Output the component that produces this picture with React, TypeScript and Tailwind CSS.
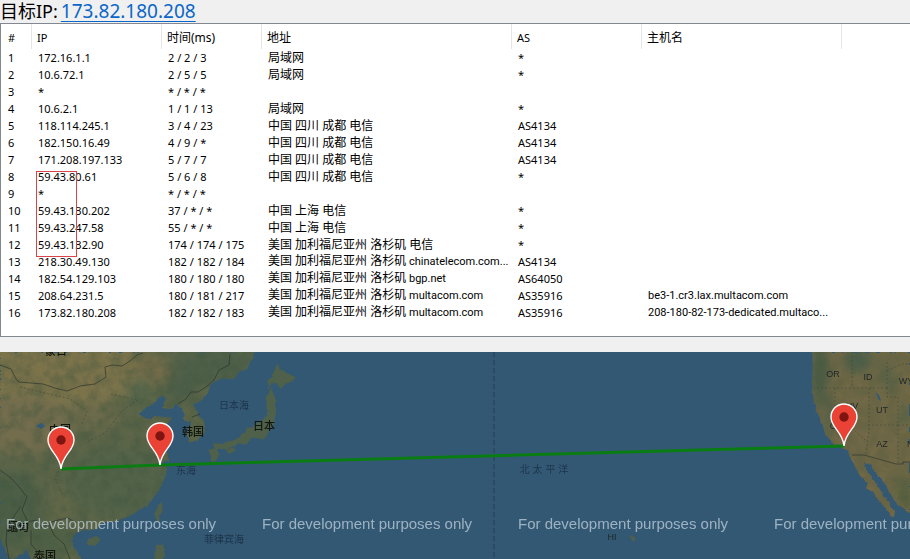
type Hop = {
  ip: string
  time: string
  place: string
  isp?: string
  as: string
  host?: string
}

const columns = ['#', 'IP', '时间(ms)', '地址', 'AS', '主机名']

const hops: Hop[] = [
  { ip: '172.16.1.1', time: '2 / 2 / 3', place: '局域网', as: '*' },
  { ip: '10.6.72.1', time: '2 / 5 / 5', place: '局域网', as: '*' },
  { ip: '*', time: '* / * / *', place: '', as: '' },
  { ip: '10.6.2.1', time: '1 / 1 / 13', place: '局域网', as: '*' },
  { ip: '118.114.245.1', time: '3 / 4 / 23', place: '中国 四川 成都 电信', as: 'AS4134' },
  { ip: '182.150.16.49', time: '4 / 9 / *', place: '中国 四川 成都 电信', as: 'AS4134' },
  { ip: '171.208.197.133', time: '5 / 7 / 7', place: '中国 四川 成都 电信', as: 'AS4134' },
  { ip: '59.43.80.61', time: '5 / 6 / 8', place: '中国 四川 成都 电信', as: '*' },
  { ip: '*', time: '* / * / *', place: '', as: '' },
  { ip: '59.43.130.202', time: '37 / * / *', place: '中国 上海 电信', as: '*' },
  { ip: '59.43.247.58', time: '55 / * / *', place: '中国 上海 电信', as: '*' },
  { ip: '59.43.132.90', time: '174 / 174 / 175', place: '美国 加利福尼亚州 洛杉矶 电信', as: '*' },
  { ip: '218.30.49.130', time: '182 / 182 / 184', place: '美国 加利福尼亚州 洛杉矶', isp: 'chinatelecom.com...', as: 'AS4134' },
  { ip: '182.54.129.103', time: '180 / 180 / 180', place: '美国 加利福尼亚州 洛杉矶', isp: 'bgp.net', as: 'AS64050' },
  { ip: '208.64.231.5', time: '180 / 181 / 217', place: '美国 加利福尼亚州 洛杉矶', isp: 'multacom.com', as: 'AS35916', host: 'be3-1.cr3.lax.multacom.com' },
  { ip: '173.82.180.208', time: '182 / 182 / 183', place: '美国 加利福尼亚州 洛杉矶', isp: 'multacom.com', as: 'AS35916', host: '208-180-82-173-dedicated.multaco...' },
]

const pins = [
  { x: 61, y: 117 },
  { x: 160, y: 113 },
  { x: 844, y: 94 },
]

const countryLabels = [
  { x: 56, y: 3, text: '蒙古' },
  { x: 60, y: 82, text: '中国' },
  { x: 193, y: 84, text: '韩国' },
  { x: 264, y: 78, text: '日本' },
  { x: 18, y: 179, text: '缅甸' },
  { x: 45, y: 208, text: '泰国' },
]

const seaLabels = [
  { x: 234, y: 57, text: '日本海' },
  { x: 186, y: 122, text: '东海' },
  { x: 224, y: 191, text: '菲律宾海' },
  { x: 544, y: 121, text: '北 太 平 洋' },
]

const stateLabels = [
  { x: 833, y: 25, text: 'OR' },
  { x: 868, y: 28, text: 'ID' },
  { x: 906, y: 32, text: 'WY' },
  { x: 852, y: 57, text: 'NV' },
  { x: 882, y: 61, text: 'UT' },
  { x: 836, y: 77, text: 'CA' },
  { x: 882, y: 95, text: 'AZ' },
  { x: 914, y: 95, text: 'NM' },
  { x: 612, y: 188, text: 'HI' },
]

const asia =
  'M0 0H255L251 8L247 16L240 20L233 27L222 26L212 31L208 41L202 48L193 53L197 60L203 69L205 80L198 87L190 91L187 82L190 71L183 67L184 60L178 52L170 57L162 56L165 47L162 44L153 52L143 57L140 62L146 67L158 64L173 66L166 72L158 78L160 90L166 98L169 108L161 112L167 117L164 127L158 140L148 152L135 161L120 168L105 171L94 178L87 177L76 181L71 187L74 195L82 207H31L27 197L20 203L13 207H8L4 194L0 187Z'

const america =
  'M812 0L813 15L812 32L814 50L819 65L825 81L833 92L840 94L848 99L852 109L861 125L868 131L866 136L874 142L882 152L889 162L894 165L895 161L889 151L883 144L877 132L868 121L864 110L871 113L874 119L884 131L893 146L902 156L910 162V0Z'

const japan = [
  'M277 11L281 18L288 22L296 25L292 30L285 32L281 37L276 31L271 32L268 38L267 30L272 25Z',
  'M271 36L276 48L276 61L273 75L263 87L253 86L245 93L240 91L227 97L215 97L213 92L230 90L240 85L248 76L261 70L267 61L266 47Z',
  'M225 98L233 95L236 98L229 102Z',
  'M210 98L217 96L219 104L213 111L210 105Z',
]

const islands = [
  'M160 150L163 156L158 170L154 163Z',
  'M88 188L95 183L101 187L95 194L88 193Z',
  'M156 193L163 193L165 202L164 207H155Z',
  'M630 183L634 185L636 188L632 190Z',
]

function PinMarker({ x, y }: { x: number; y: number }) {
  return (
    <g transform={`translate(${x} ${y})`}>
      <path
        d="M0 0C-1 -14 -13 -18 -13 -29A13 13 0 1 1 13 -29C13 -18 1 -14 0 0Z"
        fill="#ea4335"
        stroke="#fff"
        strokeWidth="1.4"
      />
      <circle cy="-29" r="4.7" fill="#7f1510" />
    </g>
  )
}

function RouteMap() {
  return (
    <svg
      role="img"
      aria-label="路由地图"
      viewBox="0 0 910 207"
      preserveAspectRatio="xMinYMin slice"
      className="block min-h-[207px] w-full flex-1 bg-[#335874]"
    >
      <defs>
        <filter id="soft" x="-30%" y="-30%" width="160%" height="160%">
          <feGaussianBlur stdDeviation="6" />
        </filter>
        <filter id="coast" x="0" y="0" width="100%" height="100%" colorInterpolationFilters="sRGB">
          <feTurbulence type="fractalNoise" baseFrequency="0.16" numOctaves="3" seed="4" result="noise" />
          <feDisplacementMap in="SourceGraphic" in2="noise" scale="4" xChannelSelector="R" yChannelSelector="G" />
          <feGaussianBlur stdDeviation="0.5" />
        </filter>
        <filter id="relief" x="0" y="0" width="100%" height="100%" colorInterpolationFilters="sRGB">
          <feTurbulence type="fractalNoise" baseFrequency="0.09" numOctaves="4" seed="9" />
          <feColorMatrix values="0 0 0 0 0.24  0 0 0 0 0.33  0 0 0 0 0.24  1.8 0 0 0 -0.65" />
        </filter>
        <clipPath id="asiaClip">
          <path d={asia} />
        </clipPath>
        <clipPath id="americaClip">
          <path d={america} />
        </clipPath>
      </defs>

      <g filter="url(#coast)">
        <path d={asia} fill="#5c6548" />
        <g clipPath="url(#asiaClip)">
          <g filter="url(#soft)">
            <ellipse cx="60" cy="20" rx="100" ry="34" fill="#7c734c" />
            <ellipse cx="20" cy="72" rx="52" ry="30" fill="#736d4d" />
            <ellipse cx="148" cy="18" rx="20" ry="18" fill="#756d4a" />
            <ellipse cx="90" cy="66" rx="30" ry="14" fill="#6c6a4b" />
            <ellipse cx="118" cy="130" rx="50" ry="34" fill="#52634a" />
            <ellipse cx="12" cy="158" rx="30" ry="38" fill="#4d5e46" />
            <ellipse cx="60" cy="152" rx="12" ry="22" fill="#646849" />
            <ellipse cx="215" cy="14" rx="42" ry="20" fill="#4f614a" />
            <ellipse cx="181" cy="37" rx="16" ry="12" fill="#4d5f4a" />
            <ellipse cx="140" cy="40" rx="14" ry="14" fill="#58674c" />
            <ellipse cx="45" cy="190" rx="32" ry="16" fill="#516246" />
          </g>
          <rect width="260" height="207" opacity=".5" filter="url(#relief)" />
        </g>

        <path d={america} fill="#706846" />
        <g clipPath="url(#americaClip)">
          <g filter="url(#soft)">
            <ellipse cx="820" cy="20" rx="7" ry="34" fill="#425a45" />
            <ellipse cx="858" cy="8" rx="14" ry="12" fill="#4c5e48" />
            <ellipse cx="888" cy="24" rx="7" ry="14" fill="#586347" />
            <ellipse cx="830" cy="65" rx="6" ry="18" fill="#525f46" />
            <ellipse cx="905" cy="64" rx="7" ry="9" fill="#566347" />
            <ellipse cx="904" cy="140" rx="7" ry="14" fill="#53603f" />
          </g>
          <rect x="805" width="105" height="207" opacity=".3" filter="url(#relief)" />
        </g>

        {japan.map((d) => (
          <path key={d} d={d} fill="#4f604b" />
        ))}
        {islands.map((d) => (
          <path key={d} d={d} fill="#4f604b" />
        ))}
      </g>

      {/* lakes */}
      <path d="M36 74L41 71L45 74L41 77Z M876 40L879 43L881 49L878 47Z" fill="#345a75" />

      {/* country borders */}
      <g fill="none" stroke="#2f3730" strokeWidth="1" opacity=".7">
        <path d="M0 13L11 17L16 27L19 30L43 32L55 36L67 39L80 34L95 32L106 25L105 15L112 13L122 14L130 9L137 3L143 1" />
        <path d="M230 2L229 13L219 18L214 28L206 35L198 40L191 40L186 47L178 52" />
        <path d="M192 65L200 62" />
        <path d="M0 118L12 127L20 136L27 145L22 158L28 170L36 168L42 176L49 171L58 168L68 166L76 171" />
        <path d="M9 207L6 190L7 176L14 164L21 154M31 178L31 192L37 199L33 207M49 172L54 183L64 192L70 207" />
        <path d="M852 103H864L896 112H903V110H910" />
      </g>
      <g fill="none" stroke="#454a38" strokeWidth="1" strokeDasharray="2 2" opacity=".6">
        <path d="M813 36H887M852 0V36M835 36V61L865 88M869 36V78L866 103M887 10V36M887 18L903 12H910M887 36V45H898V73H869M898 73V112M898 73H910" />
        <path d="M20 35L70 47L87 59L82 72M111 42L138 48L122 59L105 81L85 91M62 112L55 126L62 142" />
      </g>

      <path d="M494 0V207" stroke="#263e53" strokeWidth="1" strokeDasharray="5 3" />

      <g textAnchor="middle" className="font-['Liberation_Sans','Noto_Sans_CJK_SC',sans-serif]">
        {seaLabels.map((label) => (
          <text key={label.text} x={label.x} y={label.y} fontSize="10" fill="#1d3449">
            {label.text}
          </text>
        ))}
        {countryLabels.map((label) => (
          <text key={label.text} x={label.x} y={label.y} fontSize="11" fontWeight="500" fill="#11150f">
            {label.text}
          </text>
        ))}
        {stateLabels.map((label) => (
          <text key={label.text} x={label.x} y={label.y} fontSize="9" fill="#20282a">
            {label.text}
          </text>
        ))}
      </g>

      <g fontSize="15" fill="#c6d5e0" opacity=".72" className="font-['Liberation_Sans',sans-serif]">
        {[6, 262, 518, 774].map((x) => (
          <text key={x} x={x} y="177">
            For development purposes only
          </text>
        ))}
      </g>

      <polyline points="61,117 160,113 844,94" fill="none" stroke="#0a7d12" strokeWidth="3" />
      {pins.map((pin) => (
        <PinMarker key={pin.x} x={pin.x} y={pin.y} />
      ))}
    </svg>
  )
}

function HopTable() {
  return (
    <div className="relative overflow-hidden border border-r-0 border-[#828790] bg-white pb-[15px]">
      <table className="w-full table-fixed border-separate border-spacing-0 text-left text-[11px] leading-4 whitespace-nowrap text-black">
        <colgroup>
          <col className="w-[31px]" />
          <col className="w-[130px]" />
          <col className="w-[100px]" />
          <col className="w-[250px]" />
          <col className="w-[130px]" />
          <col className="w-[200px]" />
          <col />
        </colgroup>
        <thead>
          <tr className="h-[25px]">
            {columns.map((column) => (
              <th key={column} scope="col" className="border-r border-[#e5e5e5] p-0 pt-0.5 pl-[5px] font-normal first:pl-[7px]">
                {column.charCodeAt(0) > 255 ? <span className="text-xs leading-4">{column}</span> : column}
              </th>
            ))}
            <td />
          </tr>
        </thead>
        <tbody>
          {hops.map((hop, index) => (
            <tr key={index} className="h-[17px]">
              <td className="p-0 pl-[7px]">{index + 1}</td>
              <td className="p-0 pl-1.5">{hop.ip}</td>
              <td className="p-0 pl-1.5">{hop.time}</td>
              <td className="p-0 pl-1.5">
                <span className="text-xs leading-4">{hop.place}</span>
                {hop.isp ? <span className="font-['Roboto',sans-serif]"> {hop.isp}</span> : null}
              </td>
              <td className="p-0 pl-1.5">{hop.as}</td>
              <td className="p-0 pl-1.5 font-['Roboto',sans-serif]">{hop.host}</td>
              <td />
            </tr>
          ))}
        </tbody>
      </table>
      {/* highlight around the 59.43.* hops */}
      <div className="pointer-events-none absolute top-[147px] left-[35px] h-[86px] w-[41px] border border-[#d9434a]" />
    </div>
  )
}

export default function App() {
  return (
    <div className="flex min-h-screen w-full flex-col bg-[#f0f0f0] font-['Noto_Sans','Noto_Sans_CJK_SC',sans-serif]">
      <h1 className="flex h-[23px] items-center gap-[3px] text-lg leading-[23px] whitespace-nowrap text-black">
        <span>目标IP:</span>
        <a href="#target" className="text-[19px] text-[#0a66c8] underline decoration-1 underline-offset-3">
          173.82.180.208
        </a>
      </h1>
      <HopTable />
      <div className="h-[15px]" />
      <RouteMap />
    </div>
  )
}
